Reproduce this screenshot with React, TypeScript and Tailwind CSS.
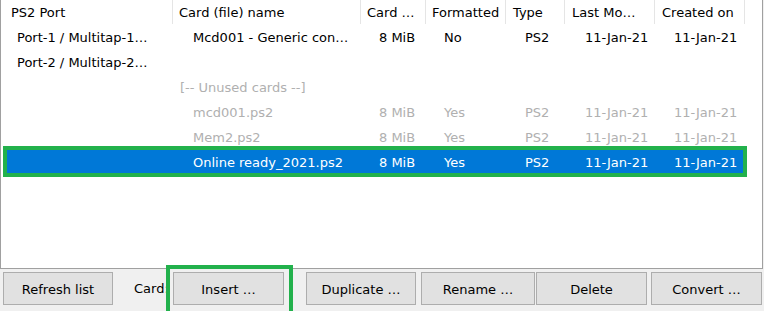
import React from 'react';

interface CardRow {
  port: string;
  name: string;
  size: string;
  formatted: string;
  type: string;
  modified: string;
  created: string;
  muted?: boolean;
  selected?: boolean;
  divider?: boolean;
}

const rows: CardRow[] = [
  { port: 'Port-1 / Multitap-1…', name: 'Mcd001 - Generic con…', size: '8 MiB', formatted: 'No', type: 'PS2', modified: '11-Jan-21', created: '11-Jan-21' },
  { port: 'Port-2 / Multitap-2…', name: '', size: '', formatted: '', type: '', modified: '', created: '' },
  { port: '', name: '[-- Unused cards --]', size: '', formatted: '', type: '', modified: '', created: '', muted: true, divider: true },
  { port: '', name: 'mcd001.ps2', size: '8 MiB', formatted: 'Yes', type: 'PS2', modified: '11-Jan-21', created: '11-Jan-21', muted: true },
  { port: '', name: 'Mem2.ps2', size: '8 MiB', formatted: 'Yes', type: 'PS2', modified: '11-Jan-21', created: '11-Jan-21', muted: true },
  { port: '', name: 'Online ready_2021.ps2', size: '8 MiB', formatted: 'Yes', type: 'PS2', modified: '11-Jan-21', created: '11-Jan-21', selected: true },
];

const headers = [
  { label: 'PS2 Port', cls: 'w-[172px] pl-[10px]' },
  { label: 'Card (file) name', cls: 'w-[188px] pl-[6px]' },
  { label: 'Card …', cls: 'w-[65px] pl-[6px]' },
  { label: 'Formatted', cls: 'w-[80px] pl-[6px]' },
  { label: 'Type', cls: 'w-[59px] pl-[7px]' },
  { label: 'Last Mo…', cls: 'w-[90px] pl-[7px]' },
  { label: 'Created on', cls: 'w-[90px] pl-[7px]' },
];

const App: React.FC = () => {
  return (
    <div className="relative w-[764px] h-[311px] overflow-hidden bg-[#f0f0f0] font-['DejaVu_Sans',sans-serif] text-[13px] text-black">
      {/* 카드 목록 */}
      <div className="w-[763px] h-[269px] bg-white border-l border-r border-b border-[#a0a0a0]">
        <div className="flex h-[24px]">
          {headers.map(h => (
            <div key={h.label} className={`${h.cls} h-full flex items-center pt-[2px] border-r border-[#e5e5e5] whitespace-nowrap`}>
              {h.label}
            </div>
          ))}
        </div>

        {rows.map((r, i) => (
          <div key={i} className="h-[25px] py-px ml-[2px] w-[742px]">
            <div
              className={`grid grid-cols-[170px_188px_65px_80px_59px_90px_90px] h-full items-center pt-[2px] whitespace-nowrap ${
                r.selected ? 'bg-[#0078d7] text-white' : r.muted ? 'text-[#b0b0b0]' : ''
              }`}
            >
              <div className="pl-[14px]">{r.port}</div>
              <div className={r.divider ? 'pl-[7px]' : 'pl-[20px]'}>{r.name}</div>
              <div className="pl-[18px]">{r.size}</div>
              <div className="pl-[18px]">{r.formatted}</div>
              <div className="pl-[19px]">{r.type}</div>
              <div className="pl-[20px]">{r.modified}</div>
              <div className="pl-[19px]">{r.created}</div>
            </div>
          </div>
        ))}
      </div>

      {/* 버튼 줄 */}
      <div className="flex items-start pt-[3px] h-[42px]">
        <button className="ml-[3px] w-[110px] h-[33px] pt-[2px] bg-[#e1e1e1] border border-[#adadad]">Refresh list</button>
        <div className="ml-[21px] w-[39px] h-[33px] flex items-center whitespace-nowrap overflow-hidden">Card:</div>
        <button className="w-[111px] h-[33px] pt-[2px] bg-[#e1e1e1] border border-[#adadad]">Insert …</button>
        <button className="ml-[22px] w-[110px] h-[33px] pt-[2px] bg-[#e1e1e1] border border-[#adadad]">Duplicate …</button>
        <button className="ml-[5px] w-[114px] h-[33px] pt-[2px] bg-[#e1e1e1] border border-[#adadad]">Rename …</button>
        <button className="ml-[1px] w-[111px] h-[33px] pt-[2px] bg-[#e1e1e1] border border-[#adadad]">Delete</button>
        <button className="ml-[4px] w-[111px] h-[33px] pt-[2px] bg-[#e1e1e1] border border-[#adadad]">Convert …</button>
      </div>

      {/* 강조 표시 */}
      <div className="absolute left-[3px] top-[146px] w-[744px] h-[31px] border-4 border-[#22b14c] pointer-events-none" />
      <div className="absolute left-[166px] top-[265px] w-[127px] h-[50px] border-4 border-[#22b14c] pointer-events-none" />
    </div>
  );
};

export default App;
